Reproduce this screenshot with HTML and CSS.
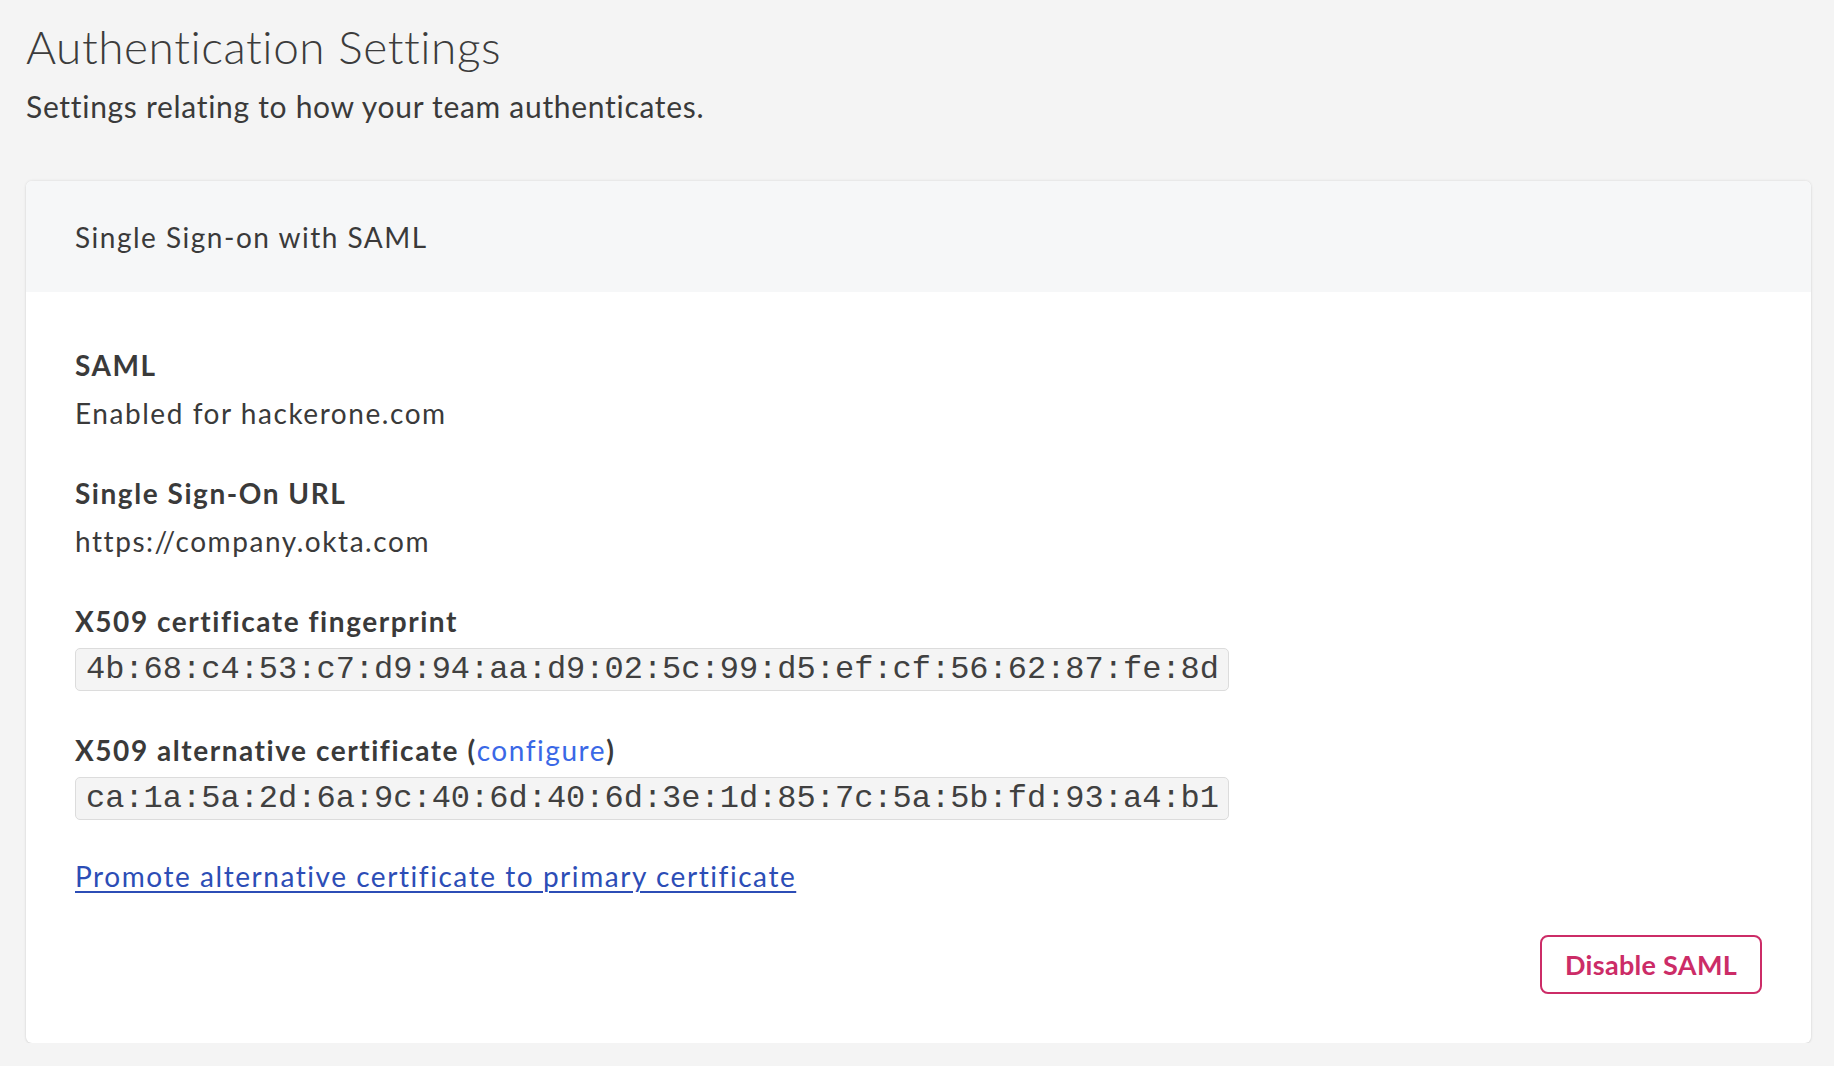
FILE: index.html
```html
<!DOCTYPE html>
<html lang="en">
<head>
<meta charset="utf-8">
<title>Authentication Settings</title>
<link rel="stylesheet" href="styles.css">
</head>
<body>
<main class="page">
  <h1 class="page-title">Authentication Settings</h1>
  <p class="page-subtitle">Settings relating to how your team authenticates.</p>

  <section class="card">
    <header class="card-header">Single Sign-on with SAML</header>
    <div class="card-body">
      <div class="field">
        <div class="field-label">SAML</div>
        <div class="field-value">Enabled for hackerone.com</div>
      </div>
      <div class="field">
        <div class="field-label">Single Sign-On URL</div>
        <div class="field-value">https://company.okta.com</div>
      </div>
      <div class="field field-code">
        <div class="field-label">X509 certificate fingerprint</div>
        <code class="code-box">4b:68:c4:53:c7:d9:94:aa:d9:02:5c:99:d5:ef:cf:56:62:87:fe:8d</code>
      </div>
      <div class="field field-code field-code-last">
        <div class="field-label">X509 alternative certificate (<a class="inline-link" href="#">configure</a>)</div>
        <code class="code-box">ca:1a:5a:2d:6a:9c:40:6d:40:6d:3e:1d:85:7c:5a:5b:fd:93:a4:b1</code>
      </div>
      <div class="field">
        <a class="promote-link" href="#">Promote alternative certificate to primary certificate</a>
      </div>
      <div class="actions">
        <button class="btn-danger" type="button">Disable SAML</button>
      </div>
    </div>
  </section>
</main>
</body>
</html>
```

FILE: styles.css
```css
html, body {
  margin: 0;
  padding: 0;
  background: #f4f4f4;
}

body {
  font-family: Lato, "Noto Sans", sans-serif;
  color: #3a3a3a;
}

.page {
  padding: 19px 23px 0 26px;
}

.page-title {
  margin: 0;
  font-size: 46px;
  font-weight: 300;
  line-height: 56px;
  letter-spacing: 0.55px;
  color: #3c3c3c;
}

.page-subtitle {
  margin: 11px 0 0 0;
  font-size: 30px;
  line-height: 40px;
  letter-spacing: 0.7px;
  color: #3a3a3a;
}

.card {
  margin-top: 55px;
  background: #ffffff;
  border-radius: 6px;
  box-shadow: 0 0 3px rgba(0, 0, 0, 0.12), 0 1px 2px rgba(0, 0, 0, 0.06);
  overflow: hidden;
}

.card-header {
  height: 111px;
  display: flex;
  align-items: center;
  padding: 0 49px;
  background: #f6f7f8;
  font-size: 28px;
  letter-spacing: 1.5px;
  color: #3a3a3a;
}

.card-body {
  padding: 49px 49px 49px 49px;
  display: flex;
  flex-direction: column;
  letter-spacing: 1.55px;
}

.field {
  display: flex;
  flex-direction: column;
  align-items: flex-start;
  margin-bottom: 32px;
}

.field-code {
  margin-bottom: 35px;
}

.field-code-last {
  margin-bottom: 32px;
}

.field-label {
  font-size: 28px;
  font-weight: 700;
  line-height: 48px;
  color: #3a3a3a;
}

.field-value {
  font-size: 28px;
  line-height: 48px;
  color: #3a3a3a;
}

.code-box {
  margin-top: 3px;
  display: inline-block;
  font-family: "Liberation Mono", "DejaVu Sans Mono", monospace;
  font-size: 32px;
  line-height: 37px;
  letter-spacing: 0;
  padding: 2px 9px 2px 10px;
  background: #f4f4f4;
  border: 1px solid #dcdcdc;
  border-radius: 5px;
  color: #404040;
}

.inline-link {
  color: #3a68e6;
  font-weight: 400;
  text-decoration: none;
}

.promote-link {
  font-size: 28px;
  line-height: 48px;
  color: #2c4db6;
  text-decoration: underline;
  text-decoration-thickness: 2px;
  text-underline-offset: 4px;
}

.actions {
  display: flex;
  justify-content: flex-end;
  margin-top: 3px;
}

.btn-danger {
  font-family: Lato, "Noto Sans", sans-serif;
  font-size: 27px;
  font-weight: 700;
  letter-spacing: 0.3px;
  color: #cc2c67;
  background: #ffffff;
  border: 2px solid #cc2c67;
  border-radius: 8px;
  height: 59px;
  width: 222px;
  padding: 0;
  cursor: pointer;
}
```
